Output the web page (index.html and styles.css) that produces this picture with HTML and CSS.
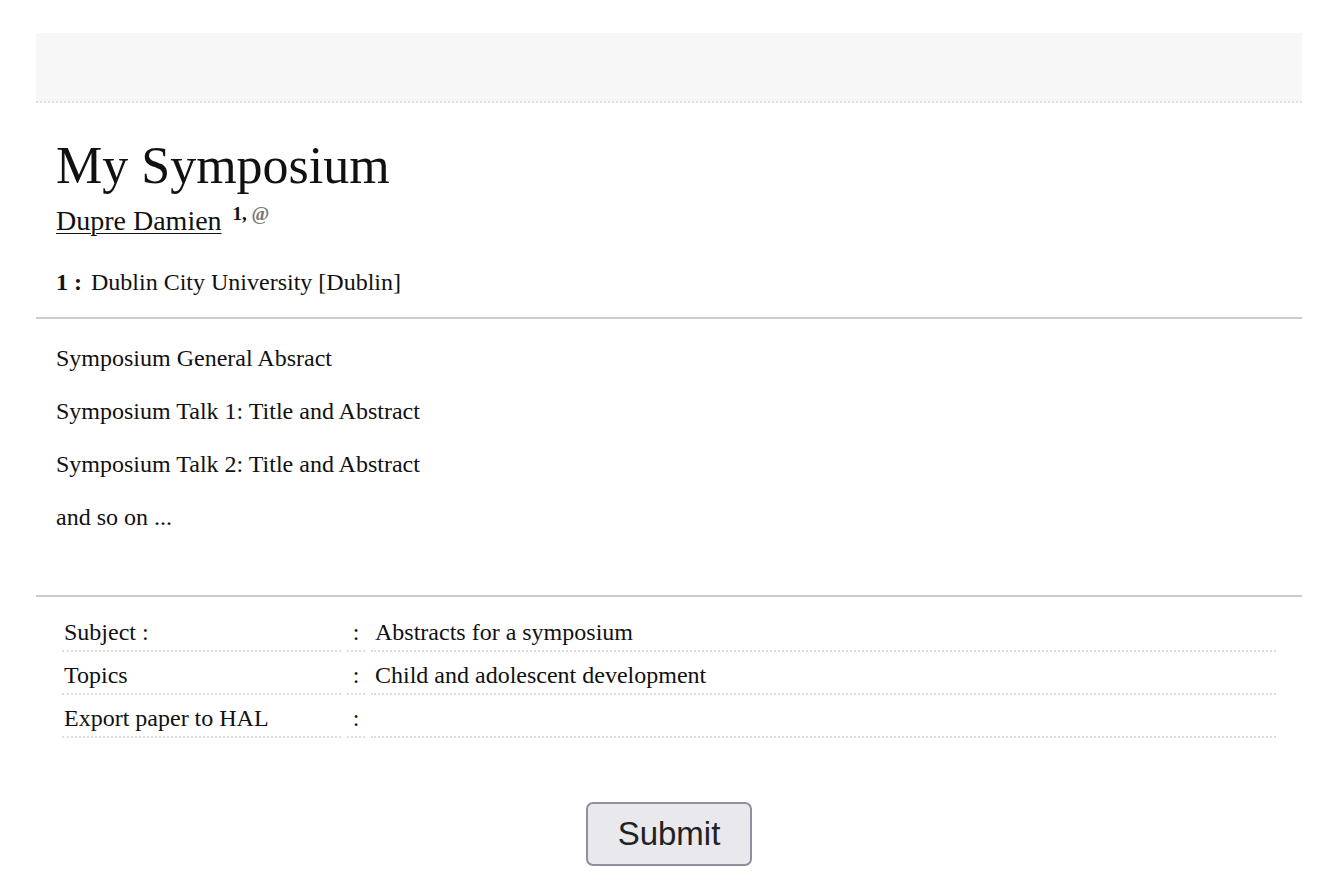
FILE: index.html
```html
<!DOCTYPE html>
<html>
<head>
<meta charset="utf-8">
<link rel="stylesheet" href="styles.css">
</head>
<body>
<div class="page">
  <div class="topbar"></div>
  <div class="head">
    <h1 class="title">My Symposium</h1>
    <div class="authors"><a class="author" href="#">Dupre Damien</a> <sup class="sup">1, <span class="at">@</span></sup></div>
    <div class="affil"><b>1 :</b> <span class="affname">Dublin City University [Dublin]</span></div>
  </div>
  <div class="abstract">
    <p>Symposium General Absract</p>
    <p>Symposium Talk 1: Title and Abstract</p>
    <p>Symposium Talk 2: Title and Abstract</p>
    <p>and so on ...</p>
  </div>
  <div class="meta">
    <table class="metatable">
      <tr><td class="lbl">Subject :</td><td class="col">:</td><td class="val">Abstracts for a symposium</td></tr>
      <tr><td class="lbl">Topics</td><td class="col">:</td><td class="val">Child and adolescent development</td></tr>
      <tr><td class="lbl">Export paper to HAL</td><td class="col">:</td><td class="val"></td></tr>
    </table>
  </div>
  <div class="actions"><button class="submit">Submit</button></div>
</div>
</body>
</html>
```
FILE: styles.css
```css
html, body { margin: 0; padding: 0; background: #fff; }
body { font-family: "Liberation Serif", "Times New Roman", serif; color: #111; font-size: 24px; }
.page { margin: 33px 34px 0 36px; }
.topbar { height: 68px; background: #f7f7f7; border-bottom: 2px dotted #e0e0e0; }
.head { padding: 32px 20px 19px; border-bottom: 2px solid #cccccc; }
.title { margin: 0; font-size: 52px; font-weight: normal; line-height: 62px; }
.authors { font-size: 28px; line-height: 32px; margin-top: 1px; }
.author { color: #111; text-decoration: underline; text-underline-offset: 3px; text-decoration-thickness: 1px; }
.sup { font-size: 19px; font-weight: bold; vertical-align: 10px; margin-left: 4px; }
.at { color: #777; font-size: 19px; }
.affil { margin-top: 29px; line-height: 32px; }
.affname { margin-left: 3px; }
.abstract { padding: 24px 20px 40px; border-bottom: 2px solid #cccccc; }
.abstract p { margin: 0 0 22px; line-height: 31px; }
.meta { padding: 12px 20px 0; }
.metatable { width: 100%; border-spacing: 6px 2px; border-collapse: separate; }
.metatable td { border-bottom: 2px dotted #dddddd; padding: 6px 2px 3px; line-height: 30px; vertical-align: top; }
.lbl { width: 275px; }
.col { width: 14px; text-align: center; }
.val { padding-left: 4px !important; }
.actions { text-align: center; padding-top: 62px; }
.submit { font-family: "Liberation Sans", Arial, sans-serif; font-size: 33px; color: #222; background: #e9e9ed; border: 2px solid #8f8f9d; border-radius: 7px; width: 166px; height: 64px; padding: 0; }
```
